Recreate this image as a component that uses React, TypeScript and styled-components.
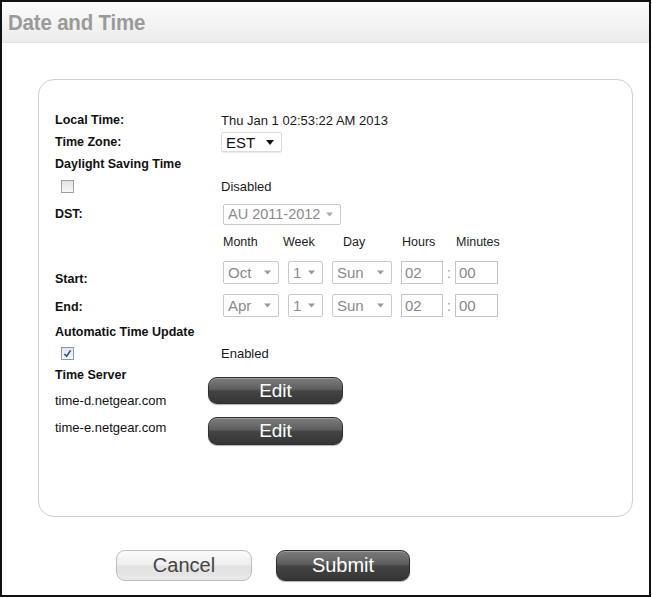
import React from "react";
import styled, { createGlobalStyle } from "styled-components";

const Global = createGlobalStyle`
  html, body { margin: 0; padding: 0; background: #fff; }
  body { font-family: "Liberation Sans", Arial, sans-serif; color: #111; }
  * { box-sizing: border-box; }
`;

const Frame = styled.div`
  width: 651px;
  height: 597px;
  border: 2px solid #111;
  background: #fff;
  display: flex;
  flex-direction: column;
`;

const Header = styled.div`
  height: 41px;
  flex: none;
  display: flex;
  align-items: center;
  padding-left: 6px;
  background: linear-gradient(#fbfbfb, #ececec);
  border-bottom: 1px solid #e4e4e4;
`;

const Title = styled.h1`
  margin: 0;
  font-size: 20.5px;
  font-weight: bold;
  color: #9a9a9a;
  letter-spacing: -0.2px;
  transform: scaleY(1.12);
`;

const Panel = styled.div`
  margin: 36px 0 0 36px;
  width: 595px;
  height: 438px;
  border: 1px solid #cfcfcf;
  border-radius: 16px;
  padding: 29px 0 0 16px;
  display: flex;
  flex-direction: column;
`;

const Row = styled.div<{ $h: number }>`
  height: ${(p) => p.$h}px;
  display: grid;
  grid-template-columns: 166px 1fr;
  align-items: center;
`;

const Label = styled.div<{ $shift?: number }>`
  font-size: 12.5px;
  font-weight: bold;
  color: #111;
  white-space: nowrap;
  transform: translateY(${(p) => p.$shift ?? 0}px);
`;

const Value = styled.div`
  font-size: 13px;
  color: #1a1a1a;
  white-space: nowrap;
`;

const CheckCell = styled.div`
  padding-left: 6px;
  display: flex;
  align-items: center;
`;

const Box = styled.div<{ $checked?: boolean }>`
  width: 13px;
  height: 13px;
  border: 1px solid ${(p) => (p.$checked ? "#8d99ab" : "#a0a0a0")};
  background: ${(p) =>
    p.$checked ? "linear-gradient(#dfe6f0, #f6f8fb)" : "linear-gradient(#e2e2e2, #f7f7f7)"};
  display: flex;
  align-items: center;
  justify-content: center;
`;

const SelectBox = styled.div<{ $w: number; $h: number; $disabled?: boolean; $fs?: number }>`
  width: ${(p) => p.$w}px;
  height: ${(p) => p.$h}px;
  border: 1px solid ${(p) => (p.$disabled ? "#c9c9c9" : "#dcdcdc")};
  border-radius: 2px;
  background: #fff;
  box-shadow: ${(p) => (p.$disabled ? "none" : "0 1px 1px rgba(0,0,0,0.08)")};
  display: flex;
  align-items: center;
  justify-content: space-between;
  padding: 0 7px 0 4px;
  font-size: ${(p) => p.$fs ?? 15}px;
  color: ${(p) => (p.$disabled ? "#8a8a8a" : "#111")};
  white-space: nowrap;
`;

const TextBox = styled.div<{ $w: number }>`
  width: ${(p) => p.$w}px;
  height: 23px;
  border: 1px solid #c4c4c4;
  background: #fff;
  display: flex;
  align-items: center;
  padding-left: 3px;
  font-size: 15px;
  color: #888;
`;

const Controls = styled.div`
  display: flex;
  align-items: center;
  padding-left: 2px;
`;

const Colon = styled.span`
  width: 12px;
  text-align: center;
  font-size: 14px;
  color: #999;
`;

const Heads = styled.div`
  display: grid;
  grid-template-columns: 60px 60px 59px 54px auto;
  padding-left: 2px;
  font-size: 12.5px;
  color: #222;
`;

const ServerSection = styled.div`
  display: flex;
`;

const ServerLabels = styled.div`
  width: 153px;
  display: flex;
  flex-direction: column;
`;

const ServerLine = styled.div<{ $bold?: boolean; $h: number }>`
  height: ${(p) => p.$h}px;
  display: flex;
  align-items: center;
  font-size: ${(p) => (p.$bold ? 12.5 : 13)}px;
  font-weight: ${(p) => (p.$bold ? "bold" : "normal")};
  color: #111;
  white-space: nowrap;
`;

const ServerButtons = styled.div`
  display: flex;
  flex-direction: column;
  gap: 13px;
  padding-top: 16px;
`;

const DarkButton = styled.button<{ $w: number; $h: number; $fs: number }>`
  width: ${(p) => p.$w}px;
  height: ${(p) => p.$h}px;
  border: 1px solid #2e2e2e;
  border-radius: 9px;
  background: linear-gradient(#7c7c7c 0%, #5e5e5e 45%, #444 52%, #353535 100%);
  box-shadow: inset 0 1px 0 rgba(255, 255, 255, 0.25), 0 1px 1px rgba(0, 0, 0, 0.3);
  color: #fff;
  font-family: "Liberation Sans", Arial, sans-serif;
  font-size: ${(p) => p.$fs}px;
  padding: 0;
  display: flex;
  align-items: center;
  justify-content: center;
`;

const LightButton = styled.button`
  width: 136px;
  height: 31px;
  border: 1px solid #bdbdbd;
  border-radius: 9px;
  background: linear-gradient(#fafafa 0%, #efefef 48%, #e2e2e2 52%, #e8e8e8 100%);
  color: #444;
  font-family: "Liberation Sans", Arial, sans-serif;
  font-size: 20px;
  padding: 0;
`;

const Footer = styled.div`
  display: flex;
  gap: 24px;
  padding: 33px 0 0 114px;
`;

const Arrow = ({ color = "#111", size = 7 }: { color?: string; size?: number }) => (
  <svg width={size} height={Math.ceil(size * 0.6)} viewBox="0 0 10 6">
    <path d="M0 0 L10 0 L5 6 Z" fill={color} />
  </svg>
);

const Check = () => (
  <svg width="9" height="9" viewBox="0 0 10 10">
    <path d="M1.5 5.5 L4 8 L8.5 1.5" stroke="#2c4f8c" strokeWidth="1.8" fill="none" />
  </svg>
);

const GraySelect = ({ w, text }: { w: number; text: string }) => (
  <SelectBox $w={w} $h={23} $disabled>
    <span>{text}</span>
    <Arrow color="#9a9a9a" size={7} />
  </SelectBox>
);

const Spacer = styled.div<{ $w: number }>`
  width: ${(p) => p.$w}px;
  flex: none;
`;

export default function App() {
  return (
    <>
      <Global />
      <Frame>
        <Header>
          <Title>Date and Time</Title>
        </Header>
        <Panel>
          <Row $h={22}>
            <Label>Local Time:</Label>
            <Value>Thu Jan 1 02:53:22 AM 2013</Value>
          </Row>
          <Row $h={22}>
            <Label>Time Zone:</Label>
            <div>
              <SelectBox $w={61} $h={20}>
                <span>EST</span>
                <Arrow color="#111" size={8} />
              </SelectBox>
            </div>
          </Row>
          <Row $h={22}>
            <Label>Daylight Saving Time</Label>
          </Row>
          <Row $h={22}>
            <CheckCell>
              <Box />
            </CheckCell>
            <Value>Disabled</Value>
          </Row>
          <Row $h={34}>
            <Label>DST:</Label>
            <Controls>
              <SelectBox $w={118} $h={21} $disabled $fs={14.5}>
                <span>AU 2011-2012</span>
                <Arrow color="#aaa" size={7} />
              </SelectBox>
            </Controls>
          </Row>
          <Row $h={22}>
            <div />
            <Heads>
              <span>Month</span>
              <span>Week</span>
              <span>Day</span>
              <span>Hours</span>
              <span>Minutes</span>
            </Heads>
          </Row>
          <Row $h={39}>
            <Label $shift={6}>Start:</Label>
            <Controls>
              <GraySelect w={56} text="Oct" />
              <Spacer $w={9} />
              <GraySelect w={35} text="1" />
              <Spacer $w={9} />
              <GraySelect w={60} text="Sun" />
              <Spacer $w={9} />
              <TextBox $w={42}>02</TextBox>
              <Colon>:</Colon>
              <TextBox $w={43}>00</TextBox>
            </Controls>
          </Row>
          <Row $h={27}>
            <Label $shift={1}>End:</Label>
            <Controls>
              <GraySelect w={56} text="Apr" />
              <Spacer $w={9} />
              <GraySelect w={35} text="1" />
              <Spacer $w={9} />
              <GraySelect w={60} text="Sun" />
              <Spacer $w={9} />
              <TextBox $w={42}>02</TextBox>
              <Colon>:</Colon>
              <TextBox $w={43}>00</TextBox>
            </Controls>
          </Row>
          <Row $h={26}>
            <Label>Automatic Time Update</Label>
          </Row>
          <Row $h={16}>
            <CheckCell>
              <Box $checked>
                <Check />
              </Box>
            </CheckCell>
            <Value>Enabled</Value>
          </Row>
          <ServerSection>
            <ServerLabels>
              <ServerLine $bold $h={28}>Time Server</ServerLine>
              <ServerLine $h={22}>time-d.netgear.com</ServerLine>
              <ServerLine $h={32}>time-e.netgear.com</ServerLine>
            </ServerLabels>
            <ServerButtons>
              <DarkButton $w={135} $h={27} $fs={19}>Edit</DarkButton>
              <DarkButton $w={135} $h={28} $fs={19}>Edit</DarkButton>
            </ServerButtons>
          </ServerSection>
        </Panel>
        <Footer>
          <LightButton>Cancel</LightButton>
          <DarkButton $w={134} $h={31} $fs={20}>Submit</DarkButton>
        </Footer>
      </Frame>
    </>
  );
}
